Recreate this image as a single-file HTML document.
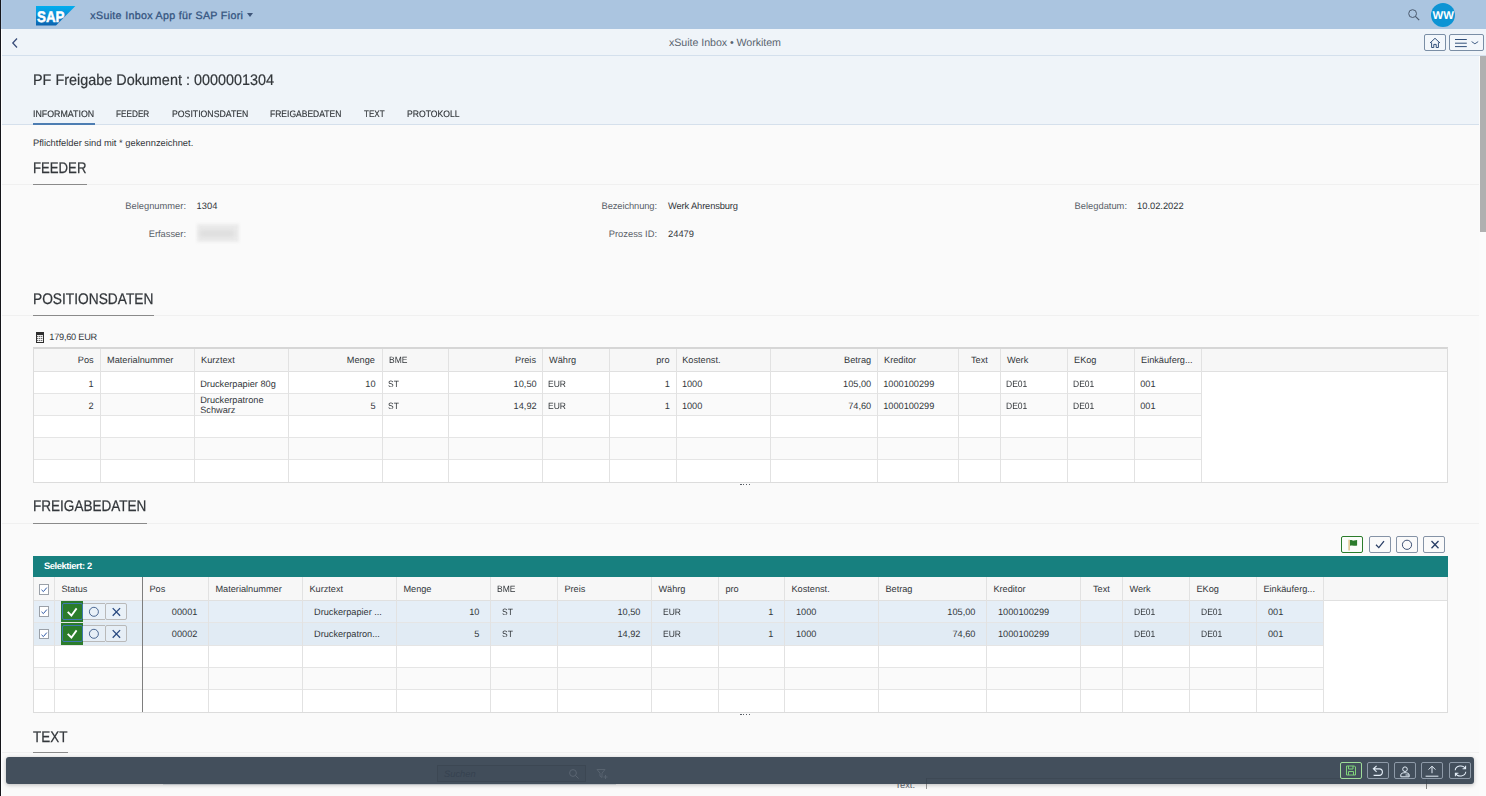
<!DOCTYPE html><html lang='de'><head><meta charset='utf-8'><title>xSuite Inbox</title><style>
*{box-sizing:border-box;margin:0;padding:0}
html,body{width:1486px;height:796px;overflow:hidden;background:#fafafa}
body{position:relative;font-family:"Liberation Sans",sans-serif;font-size:9.33px;color:#32363a;text-rendering:geometricPrecision}
.a{position:absolute}
.t{position:absolute;white-space:nowrap;line-height:1;transform-origin:0 50%}
.tr{position:absolute;white-space:nowrap;line-height:1;text-align:right;transform-origin:100% 50%}
.lbl{color:#6a6d70}
.hl{position:absolute;height:1px;background:#e5e5e5}
.vl{position:absolute;width:1px;background:#e5e5e5}
.btn{position:absolute;border:1px solid #7a8ea5;border-radius:2px;background:#fff}
</style></head><body>
<div class='a' style='left:0px;top:0px;width:1486px;height:29px;background:#abc5e0;'></div>
<svg class='a' style='left:36px;top:6px' width='40' height='20' viewBox='0 0 40 20'>
<defs><linearGradient id='g' x1='0' y1='0' x2='0' y2='1'><stop offset='0' stop-color='#00aeef'/><stop offset='0.3' stop-color='#0a9be0'/><stop offset='1' stop-color='#0b62ae'/></linearGradient></defs>
<polygon points='0,0 39.4,0 20,19.6 0,19.6' fill='url(#g)'/>
<text x='1' y='15.7' font-family='Liberation Sans, sans-serif' font-weight='700' font-size='15.3' fill='#fff' stroke='#fff' stroke-width='0.5' textLength='27.5' lengthAdjust='spacingAndGlyphs'>SAP</text>
</svg>
<span class='t' style='top:10.77px;font-size:10.67px;color:#34547f;letter-spacing:0.326px;left:90.30px;-webkit-text-stroke:0.3px #34547f;'>xSuite Inbox App für SAP Fiori</span>
<div class='a' style='left:247px;top:13px;width:0;height:0;border-left:3.5px solid transparent;border-right:3.5px solid transparent;border-top:4.5px solid #3f5679'></div>
<svg class='a' style='left:1407px;top:8px' width='14' height='14' viewBox='0 0 14 14'><circle cx='5.6' cy='5.6' r='3.9' fill='none' stroke='#4b5a6e' stroke-width='1'/><line x1='8.4' y1='8.4' x2='12.2' y2='12.2' stroke='#4b5a6e' stroke-width='1.2'/></svg>
<div class='a' style='left:1431px;top:3px;width:24px;height:24px;border-radius:50%;background:#0d94d4'></div>
<span class='t' style='top:11.23px;font-size:11.3px;color:#fff;font-weight:700;letter-spacing:0.072px;left:1432.60px;'>WW</span>
<div class='a' style='left:0px;top:29px;width:1486px;height:27px;background:#eff4f9;'></div>
<div class='a' style='left:0px;top:55px;width:1486px;height:1px;background:#d4e0ed;'></div>
<svg class='a' style='left:10px;top:37px' width='10' height='12' viewBox='0 0 10 12'><polyline points='7,1.5 2.8,6 7,10.5' fill='none' stroke='#3a4d7a' stroke-width='1.3'/></svg>
<span class='t' style='top:37.97px;font-size:10.67px;color:#5a6470;letter-spacing:-0.05px;left:669.00px;'>xSuite Inbox • Workitem</span>
<div class='btn' style='left:1424px;top:34px;width:22px;height:17px;background:#f3f7fb'></div>
<div class='btn' style='left:1449px;top:34px;width:35px;height:17px;background:#f3f7fb'></div>
<svg class='a' style='left:1429px;top:37px' width='12' height='12' viewBox='0 0 12 12'><path d='M1,6 L6,1.3 L11,6 M2.6,5.4 V10.5 H4.8 V7.4 H7.2 V10.5 H9.4 V5.4' fill='none' stroke='#32507a' stroke-width='1'/></svg>
<svg class='a' style='left:1455px;top:38px' width='28' height='10' viewBox='0 0 28 10'><path d='M0,1.5 H11.8 M0,5.2 H11.8 M0,8.6 H11.8' stroke='#32507a' stroke-width='1'/><polyline points='16.6,3.6 19.9,5.8 23.2,3.6' fill='none' stroke='#32507a' stroke-width='0.9'/></svg>
<div class='a' style='left:0px;top:56px;width:1479px;height:69px;background:#eff4f9;'></div>
<div class='a' style='left:0px;top:123.5px;width:1479px;height:1.5px;background:#d5e0ec;'></div>
<span class='t' style='top:72.56px;font-size:15.4px;color:#32363a;transform:scaleX(0.9358);left:33.30px;-webkit-text-stroke:0.2px #32363a;'>PF Freigabe Dokument : 0000001304</span>
<span class='t' style='top:109.60px;font-size:9.33px;color:#32363a;transform:scaleX(0.9472);left:33.00px;-webkit-text-stroke:0.15px #32363a;'>INFORMATION</span>
<span class='t' style='top:109.60px;font-size:9.33px;color:#32363a;transform:scaleX(0.8799);left:116.10px;-webkit-text-stroke:0.15px #32363a;'>FEEDER</span>
<span class='t' style='top:109.60px;font-size:9.33px;color:#32363a;transform:scaleX(0.9349);left:171.60px;-webkit-text-stroke:0.15px #32363a;'>POSITIONSDATEN</span>
<span class='t' style='top:109.60px;font-size:9.33px;color:#32363a;transform:scaleX(0.913);left:269.90px;-webkit-text-stroke:0.15px #32363a;'>FREIGABEDATEN</span>
<span class='t' style='top:109.60px;font-size:9.33px;color:#32363a;transform:scaleX(0.864);left:363.70px;-webkit-text-stroke:0.15px #32363a;'>TEXT</span>
<span class='t' style='top:109.60px;font-size:9.33px;color:#32363a;transform:scaleX(0.9233);left:406.80px;-webkit-text-stroke:0.15px #32363a;'>PROTOKOLL</span>
<div class='a' style='left:33px;top:123px;width:61.5px;height:2px;background:#4d7db2;'></div>
<div class='a' style='left:1479px;top:56px;width:7px;height:740px;background:#fbfbfb;'></div>
<div class='a' style='left:1480px;top:56px;width:6px;height:176px;background:#b0b0b0;'></div>
<span class='t' style='top:138.60px;font-size:9.33px;color:#32363a;left:33.00px;'>Pflichtfelder sind mit * gekennzeichnet.</span>
<span class='t' style='top:161.46px;font-size:15.4px;color:#32363a;transform:scaleX(0.8553);left:33.30px;-webkit-text-stroke:0.25px #32363a;'>FEEDER</span>
<div class='a' style='left:0px;top:184px;width:1479px;height:1px;background:#f0f0f0;'></div>
<div class='a' style='left:33px;top:184px;width:54px;height:1px;background:#8a8a8a;'></div>
<span class='t' style='top:291.56px;font-size:15.4px;color:#32363a;transform:scaleX(0.893);left:33.30px;-webkit-text-stroke:0.25px #32363a;'>POSITIONSDATEN</span>
<div class='a' style='left:0px;top:315px;width:1479px;height:1px;background:#f0f0f0;'></div>
<div class='a' style='left:33px;top:315px;width:121px;height:1px;background:#8a8a8a;'></div>
<span class='t' style='top:499.16px;font-size:15.4px;color:#32363a;transform:scaleX(0.8801);left:33.30px;-webkit-text-stroke:0.25px #32363a;'>FREIGABEDATEN</span>
<div class='a' style='left:0px;top:523px;width:1479px;height:1px;background:#f0f0f0;'></div>
<div class='a' style='left:33px;top:523px;width:114px;height:1px;background:#8a8a8a;'></div>
<span class='t' style='top:729.56px;font-size:15.4px;color:#32363a;transform:scaleX(0.8743);left:33.30px;-webkit-text-stroke:0.25px #32363a;'>TEXT</span>
<div class='a' style='left:0px;top:752px;width:1479px;height:1px;background:#f0f0f0;'></div>
<div class='a' style='left:33px;top:752px;width:35px;height:1px;background:#8a8a8a;'></div>
<span class='tr' style='top:201.60px;font-size:9.33px;color:#596068;right:1300.00px;'>Belegnummer:</span>
<span class='t' style='top:201.60px;font-size:9.33px;color:#32363a;left:196.60px;'>1304</span>
<span class='tr' style='top:230.10px;font-size:9.33px;color:#596068;right:1300.00px;'>Erfasser:</span>
<div class='a' style='left:197px;top:224px;width:42px;height:18px;background:#ebebeb;filter:blur(1.6px)'></div>
<div class='a' style='left:200px;top:230px;width:34px;height:7px;background:#dedede;filter:blur(2.2px)'></div>
<span class='tr' style='top:201.60px;font-size:9.33px;color:#596068;letter-spacing:-0.094px;right:829.09px;'>Bezeichnung:</span>
<span class='t' style='top:201.60px;font-size:9.33px;color:#32363a;letter-spacing:-0.136px;left:668.00px;'>Werk Ahrensburg</span>
<span class='tr' style='top:230.10px;font-size:9.33px;color:#596068;right:829.00px;'>Prozess ID:</span>
<span class='t' style='top:230.10px;font-size:9.33px;color:#32363a;left:668.00px;'>24479</span>
<span class='tr' style='top:201.60px;font-size:9.33px;color:#596068;right:359.00px;'>Belegdatum:</span>
<span class='t' style='top:201.60px;font-size:9.33px;color:#32363a;left:1137.00px;'>10.02.2022</span>
<svg class='a' style='left:36px;top:332px' width='8' height='11' viewBox='0 0 8 11'><rect x='0.5' y='0.5' width='7' height='10' fill='#fff' stroke='#2e2e2e' stroke-width='1'/><rect x='0.5' y='0.5' width='7' height='2.6' fill='#2e2e2e'/><path d='M1,4.6 H7 M1,6.6 H7 M1,8.6 H7' stroke='#4a4a4a' stroke-width='0.9' stroke-dasharray='1.4 0.6'/></svg>
<span class='t' style='top:332.51px;font-size:9.2px;color:#32363a;letter-spacing:-0.24px;left:49.30px;'>179,60 EUR</span>
<div class='a' style='left:33px;top:348px;width:1415px;height:134px;background:#fff;'></div>
<div class='a' style='left:33px;top:348px;width:1415px;height:23px;background:#f7f7f7;'></div>
<div class='a' style='left:33px;top:393px;width:1168px;height:22px;background:#fafafa;'></div>
<div class='a' style='left:33px;top:437px;width:1168px;height:22px;background:#fafafa;'></div>
<div class='a' style='left:33px;top:371px;width:1415px;height:1px;background:#e0e0e0;'></div>
<div class='a' style='left:33px;top:393px;width:1168px;height:1px;background:#e5e5e5;'></div>
<div class='a' style='left:33px;top:415px;width:1168px;height:1px;background:#e5e5e5;'></div>
<div class='a' style='left:33px;top:437px;width:1168px;height:1px;background:#e5e5e5;'></div>
<div class='a' style='left:33px;top:459px;width:1168px;height:1px;background:#e5e5e5;'></div>
<div class='a' style='left:100px;top:348px;width:1px;height:134px;background:#e2e2e2;'></div>
<div class='a' style='left:194px;top:348px;width:1px;height:134px;background:#e2e2e2;'></div>
<div class='a' style='left:288px;top:348px;width:1px;height:134px;background:#e2e2e2;'></div>
<div class='a' style='left:382px;top:348px;width:1px;height:134px;background:#e2e2e2;'></div>
<div class='a' style='left:448px;top:348px;width:1px;height:134px;background:#e2e2e2;'></div>
<div class='a' style='left:542px;top:348px;width:1px;height:134px;background:#e2e2e2;'></div>
<div class='a' style='left:609px;top:348px;width:1px;height:134px;background:#e2e2e2;'></div>
<div class='a' style='left:676px;top:348px;width:1px;height:134px;background:#e2e2e2;'></div>
<div class='a' style='left:770px;top:348px;width:1px;height:134px;background:#e2e2e2;'></div>
<div class='a' style='left:877px;top:348px;width:1px;height:134px;background:#e2e2e2;'></div>
<div class='a' style='left:958px;top:348px;width:1px;height:134px;background:#e2e2e2;'></div>
<div class='a' style='left:1000px;top:348px;width:1px;height:134px;background:#e2e2e2;'></div>
<div class='a' style='left:1067px;top:348px;width:1px;height:134px;background:#e2e2e2;'></div>
<div class='a' style='left:1134px;top:348px;width:1px;height:134px;background:#e2e2e2;'></div>
<div class='a' style='left:1201px;top:348px;width:1px;height:134px;background:#e2e2e2;'></div>
<div class='a' style='left:33px;top:347px;width:1415px;height:2px;background:#d6d6d6;'></div>
<div class='a' style='left:33px;top:348px;width:1px;height:134px;background:#dcdcdc;'></div>
<div class='a' style='left:1447px;top:348px;width:1px;height:134px;background:#dcdcdc;'></div>
<div class='a' style='left:33px;top:482px;width:1415px;height:1px;background:#dcdcdc;'></div>
<span class='tr' style='top:356.21px;font-size:9.2px;color:#32363a;right:1392.40px;'>Pos</span>
<span class='t' style='top:356.21px;font-size:9.2px;color:#32363a;left:107.00px;'>Materialnummer</span>
<span class='t' style='top:356.21px;font-size:9.2px;color:#32363a;left:201.00px;'>Kurztext</span>
<span class='tr' style='top:356.21px;font-size:9.2px;color:#32363a;right:1111.10px;'>Menge</span>
<span class='t' style='top:356.21px;font-size:9.2px;color:#32363a;transform:scaleX(0.925);left:389.00px;'>BME</span>
<span class='tr' style='top:356.21px;font-size:9.2px;color:#32363a;right:950.00px;'>Preis</span>
<span class='t' style='top:356.21px;font-size:9.2px;color:#32363a;left:549.00px;'>Währg</span>
<span class='tr' style='top:356.21px;font-size:9.2px;color:#32363a;right:816.50px;'>pro</span>
<span class='t' style='top:356.21px;font-size:9.2px;color:#32363a;left:682.20px;'>Kostenst.</span>
<span class='tr' style='top:356.21px;font-size:9.2px;color:#32363a;right:614.90px;'>Betrag</span>
<span class='t' style='top:356.21px;font-size:9.2px;color:#32363a;left:884.00px;'>Kreditor</span>
<span class='t' style='top:356.21px;font-size:9.2px;color:#32363a;left:971.00px;'>Text</span>
<span class='t' style='top:356.21px;font-size:9.2px;color:#32363a;left:1007.00px;'>Werk</span>
<span class='t' style='top:356.21px;font-size:9.2px;color:#32363a;left:1074.00px;'>EKog</span>
<span class='t' style='top:356.21px;font-size:9.2px;color:#32363a;left:1141.00px;'>Einkäuferg...</span>
<span class='tr' style='top:379.91px;font-size:9.2px;color:#32363a;right:1392.50px;'>1</span>
<span class='t' style='top:379.91px;font-size:9.2px;color:#32363a;left:200.20px;'>Druckerpapier 80g</span>
<span class='tr' style='top:379.91px;font-size:9.2px;color:#32363a;right:1110.50px;'>10</span>
<span class='t' style='top:379.91px;font-size:9.2px;color:#32363a;transform:scaleX(0.925);left:388.20px;'>ST</span>
<span class='tr' style='top:379.91px;font-size:9.2px;color:#32363a;right:949.40px;'>10,50</span>
<span class='t' style='top:379.91px;font-size:9.2px;color:#32363a;transform:scaleX(0.925);left:548.20px;'>EUR</span>
<span class='tr' style='top:379.91px;font-size:9.2px;color:#32363a;right:816.20px;'>1</span>
<span class='t' style='top:379.91px;font-size:9.2px;color:#32363a;left:681.90px;'>1000</span>
<span class='tr' style='top:379.91px;font-size:9.2px;color:#32363a;right:614.80px;'>105,00</span>
<span class='t' style='top:379.91px;font-size:9.2px;color:#32363a;left:883.20px;'>1000100299</span>
<span class='t' style='top:379.91px;font-size:9.2px;color:#32363a;transform:scaleX(0.925);left:1006.20px;'>DE01</span>
<span class='t' style='top:379.91px;font-size:9.2px;color:#32363a;transform:scaleX(0.925);left:1073.20px;'>DE01</span>
<span class='t' style='top:379.91px;font-size:9.2px;color:#32363a;left:1140.20px;'>001</span>
<span class='tr' style='top:401.91px;font-size:9.2px;color:#32363a;right:1392.50px;'>2</span>
<span class='t' style='top:395.91px;font-size:9.2px;color:#32363a;left:200.20px;'>Druckerpatrone</span>
<span class='t' style='top:405.81px;font-size:9.2px;color:#32363a;left:200.20px;'>Schwarz</span>
<span class='tr' style='top:401.91px;font-size:9.2px;color:#32363a;right:1110.50px;'>5</span>
<span class='t' style='top:401.91px;font-size:9.2px;color:#32363a;transform:scaleX(0.925);left:388.20px;'>ST</span>
<span class='tr' style='top:401.91px;font-size:9.2px;color:#32363a;right:949.40px;'>14,92</span>
<span class='t' style='top:401.91px;font-size:9.2px;color:#32363a;transform:scaleX(0.925);left:548.20px;'>EUR</span>
<span class='tr' style='top:401.91px;font-size:9.2px;color:#32363a;right:816.20px;'>1</span>
<span class='t' style='top:401.91px;font-size:9.2px;color:#32363a;left:681.90px;'>1000</span>
<span class='tr' style='top:401.91px;font-size:9.2px;color:#32363a;right:614.80px;'>74,60</span>
<span class='t' style='top:401.91px;font-size:9.2px;color:#32363a;left:883.20px;'>1000100299</span>
<span class='t' style='top:401.91px;font-size:9.2px;color:#32363a;transform:scaleX(0.925);left:1006.20px;'>DE01</span>
<span class='t' style='top:401.91px;font-size:9.2px;color:#32363a;transform:scaleX(0.925);left:1073.20px;'>DE01</span>
<span class='t' style='top:401.91px;font-size:9.2px;color:#32363a;left:1140.20px;'>001</span>
<div class='a' style='left:740.3px;top:484px;width:1.4px;height:1.1px;background:#5a5f66;'></div>
<div class='a' style='left:743.0999999999999px;top:484px;width:1.4px;height:1.1px;background:#5a5f66;'></div>
<div class='a' style='left:745.9px;top:484px;width:1.4px;height:1.1px;background:#5a5f66;'></div>
<div class='a' style='left:748.6999999999999px;top:484px;width:1.4px;height:1.1px;background:#5a5f66;'></div>
<div class='btn' style='left:1341px;top:536px;width:22px;height:17px;border-color:#2b7c2b;background:#fbfdfa'></div>
<div class='btn' style='left:1369px;top:536px;width:22px;height:17px;border-color:#8593a6;background:transparent'></div>
<div class='btn' style='left:1396px;top:536px;width:22px;height:17px;border-color:#8593a6;background:transparent'></div>
<div class='btn' style='left:1423px;top:536px;width:22px;height:17px;border-color:#8593a6;background:transparent'></div>
<svg class='a' style='left:1346px;top:539px' width='12' height='12' viewBox='0 0 12 12'><path d='M3.1,0.8 V11.6' stroke='#d8b56f' stroke-width='1.2'/><path d='M4,1.2 C5.4,0.6 6.4,2 8,1.6 L11.1,1 V6.4 C9,7.4 7.4,6 4,6.7 Z' fill='#2b7c2b'/></svg>
<svg class='a' style='left:1374px;top:539px' width='12' height='11' viewBox='0 0 12 11'><polyline points='2,5.8 4.8,8.6 10,2.2' fill='none' stroke='#2a3f66' stroke-width='1.3'/></svg>
<svg class='a' style='left:1401px;top:539px' width='12' height='12' viewBox='0 0 12 12'><circle cx='6' cy='5.8' r='4.6' fill='none' stroke='#2a3f66' stroke-width='0.9'/></svg>
<svg class='a' style='left:1428.7px;top:539.3px' width='12' height='11' viewBox='0 0 12 11'><path d='M2.5,2 L9.5,9.3 M9.5,2 L2.5,9.3' stroke='#2a3f66' stroke-width='1.3'/></svg>
<div class='a' style='left:33px;top:556px;width:1415px;height:21px;background:#17807f;'></div>
<span class='t' style='top:561.90px;font-size:9.33px;color:#fff;font-weight:700;letter-spacing:-0.383px;left:43.90px;'>Selektiert: 2</span>
<div class='a' style='left:33px;top:577px;width:1415px;height:135px;background:#fff;'></div>
<div class='a' style='left:33px;top:577px;width:1415px;height:23px;background:#f7f7f7;'></div>
<div class='a' style='left:33px;top:600px;width:1290px;height:22px;background:#e5eef7;'></div>
<div class='a' style='left:33px;top:622px;width:1290px;height:23px;background:#e1ebf4;'></div>
<div class='a' style='left:33px;top:667px;width:1290px;height:22px;background:#fafafa;'></div>
<div class='a' style='left:33px;top:600px;width:1415px;height:1px;background:#e0e0e0;'></div>
<div class='a' style='left:33px;top:622px;width:1290px;height:1px;background:#e5e5e5;'></div>
<div class='a' style='left:33px;top:645px;width:1290px;height:1px;background:#e5e5e5;'></div>
<div class='a' style='left:33px;top:667px;width:1290px;height:1px;background:#e5e5e5;'></div>
<div class='a' style='left:33px;top:689px;width:1290px;height:1px;background:#e5e5e5;'></div>
<div class='a' style='left:54px;top:577px;width:1px;height:135px;background:#e2e2e2;'></div>
<div class='a' style='left:142px;top:577px;width:1px;height:135px;background:#e2e2e2;'></div>
<div class='a' style='left:208px;top:577px;width:1px;height:135px;background:#e2e2e2;'></div>
<div class='a' style='left:302px;top:577px;width:1px;height:135px;background:#e2e2e2;'></div>
<div class='a' style='left:396px;top:577px;width:1px;height:135px;background:#e2e2e2;'></div>
<div class='a' style='left:490px;top:577px;width:1px;height:135px;background:#e2e2e2;'></div>
<div class='a' style='left:557px;top:577px;width:1px;height:135px;background:#e2e2e2;'></div>
<div class='a' style='left:651px;top:577px;width:1px;height:135px;background:#e2e2e2;'></div>
<div class='a' style='left:718px;top:577px;width:1px;height:135px;background:#e2e2e2;'></div>
<div class='a' style='left:784px;top:577px;width:1px;height:135px;background:#e2e2e2;'></div>
<div class='a' style='left:878px;top:577px;width:1px;height:135px;background:#e2e2e2;'></div>
<div class='a' style='left:986px;top:577px;width:1px;height:135px;background:#e2e2e2;'></div>
<div class='a' style='left:1080px;top:577px;width:1px;height:135px;background:#e2e2e2;'></div>
<div class='a' style='left:1122px;top:577px;width:1px;height:135px;background:#e2e2e2;'></div>
<div class='a' style='left:1189px;top:577px;width:1px;height:135px;background:#e2e2e2;'></div>
<div class='a' style='left:1256px;top:577px;width:1px;height:135px;background:#e2e2e2;'></div>
<div class='a' style='left:1323px;top:577px;width:1px;height:135px;background:#e2e2e2;'></div>
<div class='a' style='left:33px;top:577px;width:1px;height:135px;background:#dcdcdc;'></div>
<div class='a' style='left:1447px;top:577px;width:1px;height:135px;background:#dcdcdc;'></div>
<div class='a' style='left:33px;top:712px;width:1415px;height:1px;background:#dcdcdc;'></div>
<div class='a' style='left:142px;top:577px;width:1px;height:135px;background:#7e7e7e;'></div>
<span class='t' style='top:584.71px;font-size:9.2px;color:#32363a;left:61.40px;'>Status</span>
<span class='t' style='top:584.71px;font-size:9.2px;color:#32363a;left:149.40px;'>Pos</span>
<span class='t' style='top:584.71px;font-size:9.2px;color:#32363a;left:215.40px;'>Materialnummer</span>
<span class='t' style='top:584.71px;font-size:9.2px;color:#32363a;left:309.40px;'>Kurztext</span>
<span class='t' style='top:584.71px;font-size:9.2px;color:#32363a;left:403.40px;'>Menge</span>
<span class='t' style='top:584.71px;font-size:9.2px;color:#32363a;transform:scaleX(0.925);left:497.40px;'>BME</span>
<span class='t' style='top:584.71px;font-size:9.2px;color:#32363a;left:564.40px;'>Preis</span>
<span class='t' style='top:584.71px;font-size:9.2px;color:#32363a;left:658.40px;'>Währg</span>
<span class='t' style='top:584.71px;font-size:9.2px;color:#32363a;left:725.40px;'>pro</span>
<span class='t' style='top:584.71px;font-size:9.2px;color:#32363a;left:791.40px;'>Kostenst.</span>
<span class='t' style='top:584.71px;font-size:9.2px;color:#32363a;left:885.40px;'>Betrag</span>
<span class='t' style='top:584.71px;font-size:9.2px;color:#32363a;left:993.40px;'>Kreditor</span>
<span class='t' style='top:584.71px;font-size:9.2px;color:#32363a;left:1093.00px;'>Text</span>
<span class='t' style='top:584.71px;font-size:9.2px;color:#32363a;left:1129.40px;'>Werk</span>
<span class='t' style='top:584.71px;font-size:9.2px;color:#32363a;left:1196.40px;'>EKog</span>
<span class='t' style='top:584.71px;font-size:9.2px;color:#32363a;left:1263.40px;'>Einkäuferg...</span>
<span class='tr' style='top:608.01px;font-size:9.2px;color:#32363a;right:1288.60px;'>00001</span>
<span class='t' style='top:608.01px;font-size:9.2px;color:#32363a;left:314.00px;'>Druckerpapier ...</span>
<span class='tr' style='top:608.01px;font-size:9.2px;color:#32363a;right:1006.60px;'>10</span>
<span class='t' style='top:608.01px;font-size:9.2px;color:#32363a;transform:scaleX(0.925);left:502.00px;'>ST</span>
<span class='tr' style='top:608.01px;font-size:9.2px;color:#32363a;right:845.60px;'>10,50</span>
<span class='t' style='top:608.01px;font-size:9.2px;color:#32363a;transform:scaleX(0.925);left:663.00px;'>EUR</span>
<span class='tr' style='top:608.01px;font-size:9.2px;color:#32363a;right:712.60px;'>1</span>
<span class='t' style='top:608.01px;font-size:9.2px;color:#32363a;left:796.00px;'>1000</span>
<span class='tr' style='top:608.01px;font-size:9.2px;color:#32363a;right:510.60px;'>105,00</span>
<span class='t' style='top:608.01px;font-size:9.2px;color:#32363a;left:998.00px;'>1000100299</span>
<span class='t' style='top:608.01px;font-size:9.2px;color:#32363a;transform:scaleX(0.925);left:1134.00px;'>DE01</span>
<span class='t' style='top:608.01px;font-size:9.2px;color:#32363a;transform:scaleX(0.925);left:1201.00px;'>DE01</span>
<span class='t' style='top:608.01px;font-size:9.2px;color:#32363a;left:1268.00px;'>001</span>
<span class='tr' style='top:630.01px;font-size:9.2px;color:#32363a;right:1288.60px;'>00002</span>
<span class='t' style='top:630.01px;font-size:9.2px;color:#32363a;left:314.00px;'>Druckerpatron...</span>
<span class='tr' style='top:630.01px;font-size:9.2px;color:#32363a;right:1006.60px;'>5</span>
<span class='t' style='top:630.01px;font-size:9.2px;color:#32363a;transform:scaleX(0.925);left:502.00px;'>ST</span>
<span class='tr' style='top:630.01px;font-size:9.2px;color:#32363a;right:845.60px;'>14,92</span>
<span class='t' style='top:630.01px;font-size:9.2px;color:#32363a;transform:scaleX(0.925);left:663.00px;'>EUR</span>
<span class='tr' style='top:630.01px;font-size:9.2px;color:#32363a;right:712.60px;'>1</span>
<span class='t' style='top:630.01px;font-size:9.2px;color:#32363a;left:796.00px;'>1000</span>
<span class='tr' style='top:630.01px;font-size:9.2px;color:#32363a;right:510.60px;'>74,60</span>
<span class='t' style='top:630.01px;font-size:9.2px;color:#32363a;left:998.00px;'>1000100299</span>
<span class='t' style='top:630.01px;font-size:9.2px;color:#32363a;transform:scaleX(0.925);left:1134.00px;'>DE01</span>
<span class='t' style='top:630.01px;font-size:9.2px;color:#32363a;transform:scaleX(0.925);left:1201.00px;'>DE01</span>
<span class='t' style='top:630.01px;font-size:9.2px;color:#32363a;left:1268.00px;'>001</span>
<div class='a' style='left:39px;top:584px;width:10px;height:10.6px;border:1px solid #9aa0a8;background:#fff'></div>
<svg class='a' style='left:39px;top:584px' width='10' height='10' viewBox='0 0 10 10'><polyline points='2.5,5.8 4.4,7.6 7.8,3.6' fill='none' stroke='#2f5aa8' stroke-width='1'/></svg>
<div class='a' style='left:39px;top:606px;width:10px;height:10.6px;border:1px solid #9aa0a8;background:#fff'></div>
<svg class='a' style='left:39px;top:606px' width='10' height='10' viewBox='0 0 10 10'><polyline points='2.5,5.8 4.4,7.6 7.8,3.6' fill='none' stroke='#2f5aa8' stroke-width='1'/></svg>
<div class='a' style='left:39px;top:628.8px;width:10px;height:9.9px;border:1px solid #9aa0a8;background:#fff'></div>
<svg class='a' style='left:39px;top:628.8px' width='10' height='10' viewBox='0 0 10 10'><polyline points='2.5,5.8 4.4,7.6 7.8,3.6' fill='none' stroke='#2f5aa8' stroke-width='1'/></svg>
<div class='a' style='left:61px;top:601px;width:22px;height:21px;background:#2b7c2b'></div>
<div class='a' style='left:61.6px;top:603px;width:21.4px;height:17px;border:1px solid #3f78b0;border-radius:2px'></div>
<svg class='a' style='left:66px;top:606px' width='12' height='12' viewBox='0 0 12 12'><polyline points='1.7,5.8 5.4,9.5 10.6,2.4' fill='none' stroke='#fff' stroke-width='1.8'/></svg>
<div class='a' style='left:83px;top:603px;width:22px;height:17px;border-top:1px solid #b9b9b9;border-bottom:1px solid #b9b9b9;background:rgba(255,255,255,.18)'></div>
<div class='a' style='left:105px;top:603px;width:22px;height:17px;border:1px solid #b9b9b9;border-radius:2px;background:rgba(255,255,255,.18)'></div>
<svg class='a' style='left:88px;top:606px' width='12' height='12' viewBox='0 0 12 12'><circle cx='5.9' cy='5.8' r='4.5' fill='none' stroke='#2f4f80' stroke-width='0.85'/></svg>
<svg class='a' style='left:110px;top:606px' width='12' height='12' viewBox='0 0 12 12'><path d='M2.7,2.1 L10.1,9.8 M10.1,2.1 L2.7,9.8' stroke='#2a4a80' stroke-width='1.3'/></svg>
<div class='a' style='left:61px;top:623px;width:22px;height:22px;background:#2b7c2b'></div>
<div class='a' style='left:61.6px;top:625px;width:21.4px;height:17px;border:1px solid #3f78b0;border-radius:2px'></div>
<svg class='a' style='left:66px;top:628px' width='12' height='12' viewBox='0 0 12 12'><polyline points='1.7,5.8 5.4,9.5 10.6,2.4' fill='none' stroke='#fff' stroke-width='1.8'/></svg>
<div class='a' style='left:83px;top:625px;width:22px;height:17px;border-top:1px solid #b9b9b9;border-bottom:1px solid #b9b9b9;background:rgba(255,255,255,.18)'></div>
<div class='a' style='left:105px;top:625px;width:22px;height:17px;border:1px solid #b9b9b9;border-radius:2px;background:rgba(255,255,255,.18)'></div>
<svg class='a' style='left:88px;top:628px' width='12' height='12' viewBox='0 0 12 12'><circle cx='5.9' cy='5.8' r='4.5' fill='none' stroke='#2f4f80' stroke-width='0.85'/></svg>
<svg class='a' style='left:110px;top:628px' width='12' height='12' viewBox='0 0 12 12'><path d='M2.7,2.1 L10.1,9.8 M10.1,2.1 L2.7,9.8' stroke='#2a4a80' stroke-width='1.3'/></svg>
<div class='a' style='left:740.3px;top:714px;width:1.4px;height:1.1px;background:#5a5f66;'></div>
<div class='a' style='left:743.0999999999999px;top:714px;width:1.4px;height:1.1px;background:#5a5f66;'></div>
<div class='a' style='left:745.9px;top:714px;width:1.4px;height:1.1px;background:#5a5f66;'></div>
<div class='a' style='left:748.6999999999999px;top:714px;width:1.4px;height:1.1px;background:#5a5f66;'></div>
<span class='tr' style='top:781.10px;font-size:9.33px;color:#5f6670;right:571.00px;'>Text:</span>
<div class='a' style='left:926px;top:779px;width:1px;height:10px;background:#9a9a9a;'></div>
<div class='a' style='left:926px;top:779px;width:500px;height:1px;background:#ddd;'></div>
<div class='a' style='left:1426px;top:775px;width:1px;height:14px;background:#888;'></div>
<div class='a' style='left:926px;top:777px;width:414px;height:1px;background:#c9c9c9;'></div>
<div class='a' style='left:6px;top:757px;width:1468px;height:27px;background:#434f5c;border-radius:3px;box-shadow:0 1px 4px rgba(0,0,0,.25)'></div>
<div class='a' style='left:437px;top:765px;width:149px;height:17px;border:1px solid #3c4753;background:#414d5a'></div>
<span class='t' style='top:770.10px;font-size:9.33px;color:#364250;font-style:italic;left:444.00px;'>Suchen</span>
<svg class='a' style='left:568px;top:768px' width='12' height='12' viewBox='0 0 12 12'><circle cx='5' cy='5' r='3.4' fill='none' stroke='#5a6572' stroke-width='1'/><line x1='7.4' y1='7.4' x2='10.6' y2='10.6' stroke='#5a6572' stroke-width='1'/></svg>
<svg class='a' style='left:596px;top:768px' width='13' height='12' viewBox='0 0 13 12'><path d='M1,1.5 H9 L6,5.2 V9.5 L4,8.2 V5.2 Z M9.5,7 V11 M7.5,9 H11.5' fill='none' stroke='#5a6572' stroke-width='0.9'/></svg>
<div class='a' style='left:163px;top:784px;width:453px;height:1px;background:#bcc0c4;'></div>
<div class='a' style='left:926px;top:777.5px;width:414px;height:1px;background:#3e4955;'></div>
<div class='a' style='left:926px;top:778px;width:1px;height:6px;background:#3b4652;'></div>
<div class='a' style='left:1426px;top:779px;width:1px;height:5px;background:#3a4551;'></div>
<div class='a' style='left:1340px;top:762px;width:22px;height:17px;border:1px solid #9fdc9a;border-radius:2px'></div>
<div class='a' style='left:1367px;top:762px;width:22px;height:17px;border:1px solid #8e9aa8;border-radius:2px'></div>
<div class='a' style='left:1394px;top:762px;width:22px;height:17px;border:1px solid #8e9aa8;border-radius:2px'></div>
<div class='a' style='left:1421px;top:762px;width:22px;height:17px;border:1px solid #8e9aa8;border-radius:2px'></div>
<div class='a' style='left:1449px;top:762px;width:22px;height:17px;border:1px solid #8e9aa8;border-radius:2px'></div>
<svg class='a' style='left:1345px;top:765px' width='12' height='11' viewBox='0 0 12 11'><path d='M1.5,1 H9.5 L10.5,2 V10 H1.5 Z M3.5,1 V4 H8 V1 M3.5,10 V6.5 H8.5 V10' fill='none' stroke='#7fd37a' stroke-width='1'/></svg>
<svg class='a' style='left:1372px;top:765px' width='12' height='12' viewBox='0 0 12 12'><path d='M4.6,0.8 L1.4,3.8 L4.6,6.8 M1.8,3.8 H7.4 C11.4,3.8 11.4,10.4 7.4,10.4 H1.6' fill='none' stroke='#e4eef8' stroke-width='1.15'/></svg>
<svg class='a' style='left:1399px;top:765.5px' width='12' height='12' viewBox='0 0 12 12'><circle cx='6' cy='3.2' r='2.3' fill='none' stroke='#e4eef8' stroke-width='1'/><path d='M1.8,10.8 V8.8 C1.8,6 10.2,6 10.2,8.8 V10.8 Z M6.5,9 H10' fill='none' stroke='#e4eef8' stroke-width='1'/></svg>
<svg class='a' style='left:1426px;top:765px;overflow:visible' width='12' height='12' viewBox='0 0 12 12'><path d='M6,8.2 V1.2 M2.6,4.6 L6,1.2 L9.4,4.6' fill='none' stroke='#e4eef8' stroke-width='1'/><path d='M-0.4,11.2 H12.4' stroke='#e4eef8' stroke-width='1'/></svg>
<svg class='a' style='left:1453.5px;top:765px' width='13' height='12' viewBox='0 0 13 12'><path d='M1.2,5.2 A5.4,4.8 0 0 1 11.4,3.6 M11.8,6.8 A5.4,4.8 0 0 1 1.6,8.4 M11.6,0.8 V3.8 H8.6 M1.4,11.2 V8.2 H4.4' fill='none' stroke='#e4eef8' stroke-width='1.05'/></svg>
<div class='a' style='left:1px;top:29px;width:1px;height:767px;background:#fdfeff;'></div>
<div class='a' style='left:1px;top:0px;width:1px;height:29px;background:#b7cee7;'></div>
<div class='a' style='left:0px;top:0px;width:1px;height:796px;background:#15151a;'></div>
</body></html>
